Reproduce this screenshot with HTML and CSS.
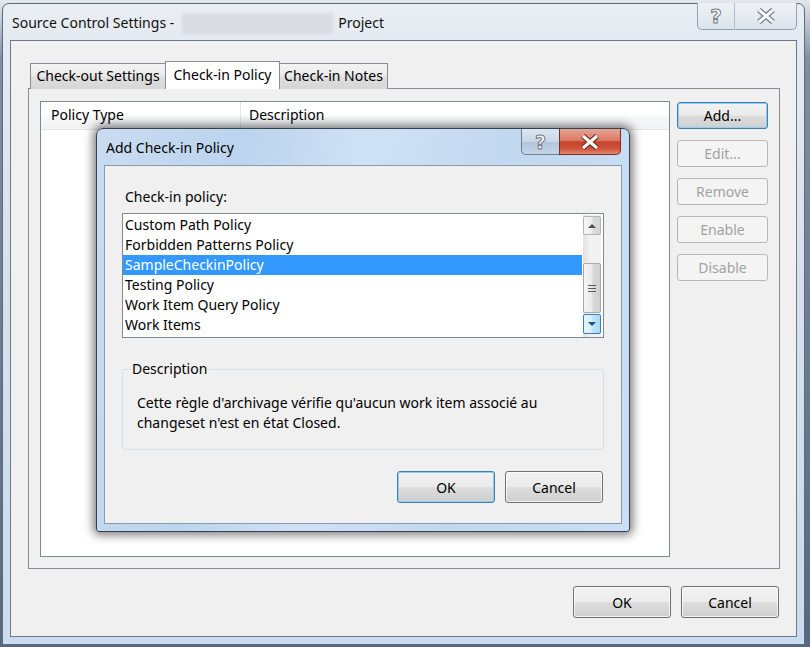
FILE: index.html
```html
<!DOCTYPE html>
<html>
<head>
<meta charset="utf-8">
<title>Source Control Settings</title>
<link rel="stylesheet" href="styles.css">
</head>
<body>
<div class="window">
  <div class="titlebar">
    <div class="title">Source Control Settings - <span class="blur"></span> Project</div>
    <div class="caps">
      <div class="cap help"><span class="qmark">?</span></div>
      <div class="cap close">
        <svg width="22" height="16" viewBox="0 0 22 16"><path d="M4 2 L18 14 M18 2 L4 14" stroke="#6f7780" stroke-width="5.5"/><path d="M4 2 L18 14 M18 2 L4 14" stroke="#f7f9fb" stroke-width="3"/></svg>
      </div>
    </div>
  </div>
  <div class="client">
    <div class="tabs">
      <div class="tab t1">Check-out Settings</div>
      <div class="tab t2 sel">Check-in Policy</div>
      <div class="tab t3">Check-in Notes</div>
    </div>
    <div class="panel">
      <div class="listview">
        <div class="lvhead">
          <div class="col c1">Policy Type</div>
          <div class="col c2">Description</div>
        </div>
      </div>
      <div class="side">
        <div class="btn focus">Add...</div>
        <div class="btn disabled">Edit...</div>
        <div class="btn disabled">Remove</div>
        <div class="btn disabled">Enable</div>
        <div class="btn disabled">Disable</div>
      </div>
    </div>
    <div class="footer">
      <div class="btn big">OK</div>
      <div class="btn big">Cancel</div>
    </div>
  </div>
</div>

<div class="dialog">
  <div class="dtitlebar">
    <div class="dtitle">Add Check-in Policy</div>
    <div class="dcaps">
      <div class="dcap dhelp"><span class="qmark small">?</span></div>
      <div class="dcap dclose">
        <svg width="24" height="16" viewBox="0 0 24 16"><path d="M5 2 L19 14 M19 2 L5 14" stroke="#7b2a1e" stroke-width="5.5"/><path d="M5 2 L19 14 M19 2 L5 14" stroke="#ffffff" stroke-width="3"/></svg>
      </div>
    </div>
  </div>
  <div class="dclient">
    <div class="dlabel">Check-in policy:</div>
    <div class="listbox">
      <div class="items">
        <div class="item">Custom Path Policy</div>
        <div class="item">Forbidden Patterns Policy</div>
        <div class="item sel">SampleCheckinPolicy</div>
        <div class="item">Testing Policy</div>
        <div class="item">Work Item Query Policy</div>
        <div class="item">Work Items</div>
      </div>
      <div class="vscroll">
        <div class="sbtn up"><span class="arr-up"></span></div>
        <div class="track"></div>
        <div class="thumb"><span class="grip"></span></div>
        <div class="sbtn down"><span class="arr-down"></span></div>
      </div>
    </div>
    <fieldset class="group">
      <legend>Description</legend>
      <div class="desc">Cette règle d'archivage vérifie qu'aucun work item associé au<br>changeset n'est en état Closed.</div>
    </fieldset>
    <div class="dbuttons">
      <div class="btn big focus">OK</div>
      <div class="btn big">Cancel</div>
    </div>
  </div>
</div>
</body>
</html>
```

FILE: styles.css
```css
* { box-sizing: border-box; }
html, body { margin: 0; padding: 0; }
body {
  width: 810px;
  height: 647px;
  overflow: hidden;
  position: relative;
  font-family: "Noto Sans", "Open Sans", sans-serif;
  font-size: 14px;
  color: #000;
  background: linear-gradient(180deg, #e4e8ee 0px, #d8dee6 6px, #7d8ea5 60px, #56677f 100%);
}

/* ---------- outer window ---------- */
.window {
  margin: 3px 0 0 2px;
  width: 803px;
  height: 642px;
  border: 1px solid #5f6b7a;
  border-radius: 7px 7px 0 0;
  background: linear-gradient(180deg, #eaeef4 0%, #e4eaf1 6%, #d6e1ec 45%, #cadcef 100%);
  padding: 0 7px 7px 7px;
  display: flex;
  flex-direction: column;
}
.titlebar {
  height: 36px;
  display: flex;
  justify-content: space-between;
  align-items: flex-start;
}
.title {
  padding: 8px 0 0 2px;
  line-height: 22px;
  white-space: nowrap;
  display: flex;
  align-items: center;
  color: #111;
}
.blur {
  display: inline-block;
  width: 151px;
  height: 21px;
  margin: 0 5px 0 8px;
  background: #d9dce1;
  filter: blur(1.5px);
}
.caps { display: flex; margin-top: -1px; }
.cap {
  height: 27px;
  border: 1px solid #96a1b0;
  border-top: none;
  display: flex;
  align-items: center;
  justify-content: center;
  background: linear-gradient(180deg, #eef2f6 0%, #e6ebf1 50%, #dbe3ec 100%);
}
.cap.help { width: 38px; border-radius: 0 0 0 5px; border-right: 1px solid #b4bdc9; }
.cap.close { width: 62px; border-left: none; border-radius: 0 0 5px 0; }
.qmark {
  font-family: "DejaVu Sans", sans-serif;
  font-weight: bold;
  font-size: 20px;
  line-height: 20px;
  color: #f6f8fa;
  -webkit-text-stroke: 1px #737b84;
}
.qmark.small { font-size: 19px; }

.client {
  flex: 1;
  background: #f0f0f0;
  border: 1px solid #6f7985;
  display: flex;
  flex-direction: column;
  padding: 0 17px 18px 17px;
}

/* ---------- tabs ---------- */
.tabs {
  display: flex;
  align-items: flex-end;
  margin: 20px 0 -1px 2px;
  height: 28px;
  position: relative;
  z-index: 1;
}
.tab {
  height: 26px;
  border: 1px solid #898c95;
  border-bottom: none;
  line-height: 24px;
  text-align: center;
  white-space: nowrap;
  background: linear-gradient(180deg, #f3f3f3 0%, #ebebeb 45%, #dedede 55%, #d6d6d6 100%);
}
.tab.t1 { width: 136px; }
.tab.t2 { width: 115px; margin-left: -1px; }
.tab.t3 { width: 109px; margin-left: -1px; }
.tab.sel {
  height: 28px;
  background: #ffffff;
  line-height: 24px;
  padding-top: 1px;
  position: relative;
  z-index: 2;
}

.panel {
  width: 752px;
  height: 481px;
  border: 1px solid #898c95;
  background: #f0f0f0;
  padding: 12px 11px 11px 11px;
  display: flex;
  gap: 7px;
}
.listview {
  width: 630px;
  border: 1px solid #828790;
  background: #ffffff;
}
.lvhead {
  height: 28px;
  display: flex;
  background: linear-gradient(180deg, #ffffff 0%, #ffffff 45%, #f5f6f7 60%, #f1f2f4 100%);
  border-bottom: 1px solid #e5e5e5;
}
.col {
  line-height: 26px;
  white-space: nowrap;
}
.col.c1 { width: 200px; padding-left: 10px; border-right: 1px solid #e3e4e6; }
.col.c2 { flex: 1; padding-left: 8px; }

.side {
  width: 91px;
  display: flex;
  flex-direction: column;
  gap: 11px;
  padding-top: 1px;
}

/* ---------- buttons ---------- */
.btn {
  height: 27px;
  border: 1px solid #707070;
  border-radius: 3px;
  background: linear-gradient(180deg, #f2f2f2 0%, #ebebeb 48%, #dddddd 52%, #cfcfcf 100%);
  box-shadow: inset 0 0 0 1px rgba(255,255,255,0.75);
  display: flex;
  align-items: center;
  justify-content: center;
  white-space: nowrap;
  color: #000;
}
.btn.focus {
  border-color: #3c7fb1;
  box-shadow: inset 0 0 0 1px #8fd0f2;
}
.btn.disabled {
  border-color: #b5b8bb;
  background: #f4f4f4;
  box-shadow: none;
  color: #a2a2a2;
}
.btn.big { width: 98px; height: 32px; }

.footer {
  display: flex;
  justify-content: flex-end;
  gap: 10px;
  margin-top: 17px;
}

/* ---------- dialog ---------- */
.dialog {
  position: absolute;
  left: 96px;
  top: 128px;
  width: 534px;
  height: 404px;
  border: 1px solid #34414f;
  border-radius: 7px 7px 3px 3px;
  background: linear-gradient(100deg, #c9dcf1 0%, #bcd4ee 25%, #cfe1f5 45%, #c2d8f0 70%, #cadff4 100%);
  padding: 0 7px 7px 7px;
  box-shadow: 0 0 10px 3px rgba(0,0,0,0.5);
  display: flex;
  flex-direction: column;
  z-index: 10;
}
.dtitlebar {
  height: 36px;
  display: flex;
  justify-content: space-between;
  align-items: flex-start;
}
.dtitle {
  padding: 9px 0 0 2px;
  line-height: 20px;
  white-space: nowrap;
}
.dcaps { display: flex; margin-right: 1px; }
.dcap {
  height: 26px;
  display: flex;
  align-items: center;
  justify-content: center;
}
.dhelp {
  width: 38px;
  border: 1px solid #6d7f96;
  border-top: none;
  border-right: none;
  border-radius: 0 0 0 5px;
  background: linear-gradient(180deg, #dbe6f2 0%, #c9d7e6 50%, #b3c5da 52%, #c5d5e7 100%);
}
.dclose {
  width: 62px;
  border: 1px solid #7a2e24;
  border-top: none;
  border-radius: 0 0 5px 0;
  background: linear-gradient(180deg, #e8a493 0%, #d97a66 45%, #c7432c 52%, #d0563e 80%, #e08a72 100%);
}
.dclient {
  flex: 1;
  background: #f0f0f0;
  border: 1px solid #8a9bb0;
  padding: 21px 17px 0 17px;
  display: flex;
  flex-direction: column;
}
.dlabel {
  line-height: 20px;
  margin: 0 0 6px 3px;
}
.listbox {
  height: 125px;
  border: 1px solid #828790;
  background: #ffffff;
  display: flex;
}
.items {
  flex: 1;
  padding-top: 1px;
  margin-right: 1px;
  overflow: hidden;
}
.item {
  height: 20px;
  line-height: 20px;
  padding-left: 2px;
  white-space: nowrap;
}
.item.sel { background: #3399ff; color: #ffffff; }

.vscroll {
  width: 18px;
  margin: 1px 2px 0 0;
  padding-top: 1px;
  display: flex;
  flex-direction: column;
  background: linear-gradient(90deg, #e2e2e2 0%, #f2f2f2 40%, #f0f0f0 100%);
}
.sbtn {
  border: 1px solid #b5b5b5;
  border-radius: 2px;
  background: linear-gradient(90deg, #f7f7f7 0%, #ececec 50%, #dcdcdc 55%, #d4d4d4 100%);
  display: flex;
  align-items: center;
  justify-content: center;
}
.sbtn.up { height: 19px; }
.track { height: 28px; }
.thumb {
  height: 50px;
  border: 1px solid #a9a9a9;
  border-radius: 2px;
  background: linear-gradient(90deg, #f6f6f6 0%, #e9e9e9 50%, #d9d9d9 55%, #d0d0d0 100%);
  display: flex;
  align-items: center;
  justify-content: center;
}
.grip {
  width: 8px;
  height: 7px;
  background: repeating-linear-gradient(180deg, #5a5a5a 0px, #5a5a5a 1px, transparent 1px, transparent 3px);
}
.sbtn.down {
  height: 20px;
  margin-top: 1px;
  border-color: #3c7fb1;
  background: linear-gradient(90deg, #e5f4fc 0%, #d4edfb 50%, #bde3f8 55%, #a9d9f4 100%);
}
.arr-up {
  width: 0; height: 0;
  border-left: 4px solid transparent;
  border-right: 4px solid transparent;
  border-bottom: 4px solid #4f4f4f;
}
.arr-down {
  width: 0; height: 0;
  border-left: 4px solid transparent;
  border-right: 4px solid transparent;
  border-top: 4px solid #22507c;
}

.group {
  margin: 22px 0 0 0;
  border: 1px solid #d5dfe5;
  border-radius: 3px;
  padding: 15px 14px 16px 14px;
  min-width: 0;
}
.group legend {
  line-height: 18px;
  padding: 0 2px;
  margin-left: -7px;
}
.desc {
  line-height: 20px;
  white-space: nowrap;
}
.dbuttons {
  display: flex;
  justify-content: flex-end;
  gap: 10px;
  margin: 21px 1px 0 0;
}
```
